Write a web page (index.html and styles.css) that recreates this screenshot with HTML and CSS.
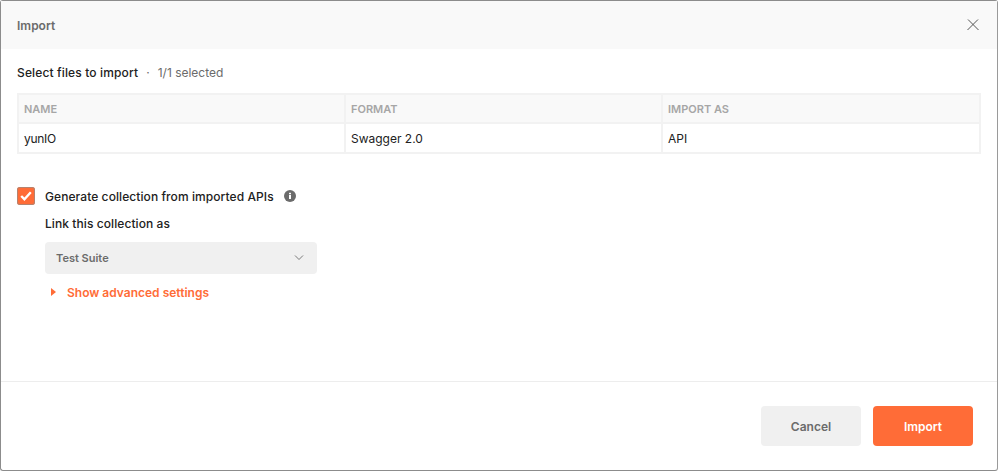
FILE: index.html
```html
<!DOCTYPE html>
<html lang="en">
<head>
<meta charset="utf-8">
<title>Import</title>
<link rel="stylesheet" href="styles.css">
</head>
<body>
<div class="dialog">
  <header class="head">
    <span class="head-title">Import</span>
    <svg class="close" width="12" height="12" viewBox="0 0 12 12"><path d="M1 .5l10.500 10.500M11 .5L.5 11" fill="none" stroke="#555" stroke-width="1"/></svg>
  </header>
  <main class="body">
    <div class="select-line"><b class="strong select-title">Select files to import</b><span class="dot">·</span><span class="muted">1/1 selected</span></div>
    <div class="table">
      <div class="th">NAME</div><div class="th">FORMAT</div><div class="th">IMPORT AS</div>
      <div class="td name">yunIO</div><div class="td">Swagger 2.0</div><div class="td">API</div>
    </div>
    <div class="gen-row">
      <span class="check"><svg width="12" height="10" viewBox="0 0 12 10"><path d="M1.200 5l3.200 3.200 6.400-7" fill="none" stroke="#fff" stroke-width="2.400"/></svg></span>
      <span class="strong">Generate collection from imported APIs</span>
      <svg class="info" width="12" height="12" viewBox="0 0 12 12"><circle cx="6" cy="6" r="6" fill="#6b6b6b"/><rect x="5" y="5" width="2" height="4" fill="#fff"/><rect x="5" y="2.800" width="2" height="1.500" fill="#fff"/></svg>
    </div>
    <div class="sub">
      <div class="strong link-label">Link this collection as</div>
      <div class="dropdown"><span>Test Suite</span><svg width="10" height="6" viewBox="0 0 10 6"><path d="M1 .5L5 4.500 9 .5" fill="none" stroke="#6b6b6b" stroke-width=".9"/></svg></div>
      <div class="advanced"><svg width="5" height="8" viewBox="0 0 5 8"><path d="M0 0l5 4-5 4z" fill="#ff6c37"/></svg><span>Show advanced settings</span></div>
    </div>
  </main>
  <footer class="foot">
    <button class="btn cancel">Cancel</button>
    <button class="btn primary">Import</button>
  </footer>
</div>
</body>
</html>
```
FILE: styles.css
```css
* { box-sizing: border-box; }
html, body { margin: 0; height: 100%; background: #fff; }
body { font-family: Inter, "Liberation Sans", sans-serif; font-size: 12px; color: #212121; overflow: hidden; }
.dialog { width: 998px; height: 471px; border: 1px solid #8c8c8c; border-right-color: #9a9a9a; border-radius: 3px; display: flex; flex-direction: column; background: #fff; }
.head { height: 48px; flex: none; background: #f9f9f9; display: flex; align-items: center; justify-content: space-between; padding: 0 18px 0 16px; }
.head-title { font-weight: 600; color: #6b6b6b; }
.body { flex: 1; padding: 16px 16px 0; min-height: 0; }
.strong { font-weight: 500; color: #212121; letter-spacing: .08px; }
.select-title { letter-spacing: .14px; }
.select-line { height: 16px; line-height: 16px; display: flex; }
.dot { margin: 0 8px; color: #6b6b6b; }
.muted { color: #6b6b6b; }
.table { margin-top: 12px; display: grid; grid-template-columns: 327px 317px 318px; grid-template-rows: 29px 30px; border-top: 2px solid #f2f2f2; border-left: 2px solid #f2f2f2; width: 964px; }
.th, .td { border-right: 2px solid #f2f2f2; border-bottom: 2px solid #f2f2f2; padding: 0 5px; display: flex; align-items: center; }
.th { background: #f9f9f9; font-size: 11px; font-weight: 600; color: #a6a6a6; }
.td { color: #212121; }
.name { letter-spacing: -.3px; }
.gen-row { margin-top: 33px; height: 18px; display: flex; align-items: center; }
.check { width: 18px; height: 18px; border-radius: 3px; background: #ff6c37; box-shadow: inset 0 0 0 1px #b5836f; display: flex; align-items: center; justify-content: center; margin-right: 10px; }
.info { margin-left: 10px; }
.sub { padding-left: 28px; }
.link-label { margin-top: 11px; line-height: 16px; }
.dropdown { margin-top: 10px; width: 272px; height: 32px; background: #f0f0f0; border-radius: 4px; display: flex; align-items: center; justify-content: space-between; padding: 0 13px 0 11px; font-size: 11px; font-weight: 600; color: #6b6b6b; }
.advanced { margin-top: 10px; height: 16px; display: flex; align-items: center; color: #ff6c37; font-weight: 600; padding-left: 6px; }
.advanced svg { margin-right: 11px; }
.foot { height: 89px; flex: none; border-top: 1px solid #ededed; display: flex; justify-content: flex-end; align-items: flex-start; gap: 12px; padding: 24px 24px 0 0; }
.btn { width: 100px; height: 40px; border: 0; border-radius: 4px; font-family: inherit; font-size: 12px; font-weight: 600; }
.cancel { background: #f0f0f0; color: #6b6b6b; }
.primary { background: #ff6c37; color: #fff; }
```
